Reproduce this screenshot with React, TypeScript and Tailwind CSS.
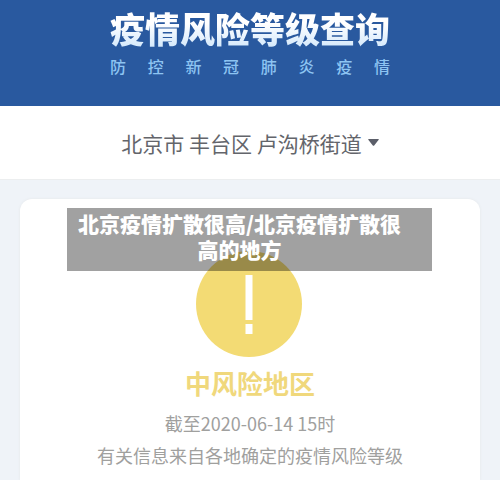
import React from "react";

const subtitle = ["防", "控", "新", "冠", "肺", "炎", "疫", "情"];

const Header: React.FC = () => {
  return (
    <header className="bg-[#29599f] pt-1.5 pb-7">
      <div className="w-fit mx-auto">
        <h1 className="text-[35px] leading-[44px] font-black bg-linear-to-b from-white from-40% to-[#cfe6fb] bg-clip-text text-transparent">
          疫情风险等级查询
        </h1>
        <p className="flex justify-between pt-1 text-base leading-6 font-medium text-[#8dc4f2]">
          {subtitle.map((char) => (
            <span key={char}>{char}</span>
          ))}
        </p>
      </div>
    </header>
  );
};

const AreaPicker: React.FC = () => {
  return (
    <div className="bg-white h-[74px] flex items-center justify-center gap-1.5 border-b border-[#eceeef]">
      <select
        aria-label="选择地区"
        className="appearance-none field-sizing-content bg-transparent text-[21px] leading-8 text-[#63656b] outline-none"
      >
        <option>北京市 丰台区 卢沟桥街道</option>
      </select>
      <svg className="w-[11px] h-[7px]" viewBox="0 0 11 7" aria-hidden="true">
        <path d="M0.5 0h10q0.5 0.4 0 1L6.2 6.4q-0.7 0.8-1.4 0L0.5 1q-0.5-0.6 0-1z" fill="#5b5e69" />
      </svg>
    </div>
  );
};

const WarningIcon: React.FC = () => {
  return (
    <svg className="w-[106px] h-[106px] mr-0.5" viewBox="0 0 106 106" aria-hidden="true">
      <circle cx="53" cy="53" r="53" fill="#f3db74" />
      <rect x="49.5" y="24" width="7" height="45" fill="#fff" />
      <rect x="49.5" y="73" width="7" height="10" fill="#fff" />
    </svg>
  );
};

const RiskCard: React.FC = () => {
  return (
    <section className="relative flex-1 mx-5 mt-[19px] pt-[52px] rounded-t-xl bg-white flex flex-col items-center text-center shadow-[0_0_3px_#e4e7e9]">
      <WarningIcon />
      <h2 className="pt-2 text-[26px] leading-9 font-bold text-[#f0d87c]">中风险地区</h2>
      <div className="pt-1.5 text-lg leading-8 text-[#a0a09e]">
        <p>截至2020-06-14 15时</p>
        <p>有关信息来自各地确定的疫情风险等级</p>
      </div>
      <div className="absolute top-[9px] inset-x-12 -ml-px h-[63px] pt-0.5 pl-2 pr-7 bg-black/37 text-white text-[21px] leading-[26px] font-black">
        北京疫情扩散很高/北京疫情扩散很高的地方
      </div>
    </section>
  );
};

const App: React.FC = () => {
  return (
    <main className="min-h-screen flex flex-col bg-[#eff3f8] font-['Noto_Sans_CJK_SC',sans-serif]">
      <Header />
      <AreaPicker />
      <RiskCard />
    </main>
  );
};

export default App;
